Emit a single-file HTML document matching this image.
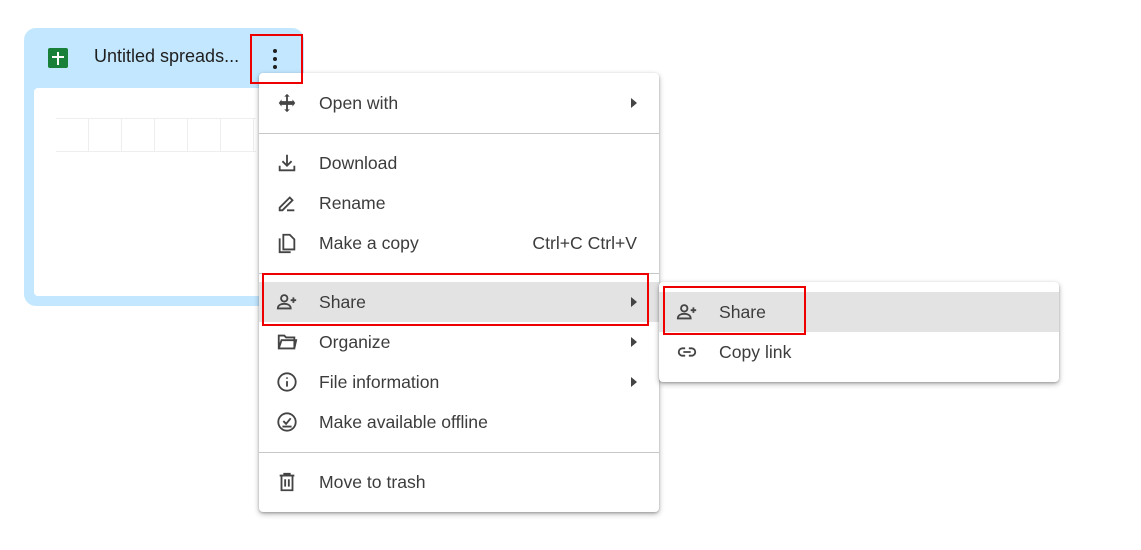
<!DOCTYPE html>
<html><head><style>
*{margin:0;padding:0;box-sizing:border-box}
body{width:1141px;height:550px;background:#fff;position:relative;overflow:hidden;font-family:"Liberation Sans",Arial,sans-serif;color:#1f1f1f}
.card{position:absolute;left:24px;top:28px;width:280px;height:278px;background:#c2e7ff;border-radius:12px}
.prev{position:absolute;left:10px;top:60px;width:250px;height:208px;background:#fff;border-radius:4px}
.title{position:absolute;left:70px;top:18px;font-size:18px;color:#1f1f1f}
.menu{position:absolute;background:#fff;border-radius:4px;box-shadow:0 2px 6px rgba(0,0,0,.3),0 1px 2px rgba(0,0,0,.2)}
.item{position:absolute;left:0;right:0;height:40px;font-size:17.6px;color:#3c3c3c}
.item .t{position:absolute;left:60px;top:10px}
.item svg{position:absolute;left:17px;top:9px}
.arr{position:absolute;right:22px;top:15px;width:0;height:0;border-left:6px solid #444;border-top:5px solid transparent;border-bottom:5px solid transparent}
.div{position:absolute;left:0;right:0;height:1px;background:#c7c7c7}
.red{position:absolute;border:2px solid #e00;}
</style></head><body>
<div class="card">
 <div style="position:absolute;left:24px;top:20px;width:20px;height:20px;background:#188038;border-radius:2px"></div>
 <div style="position:absolute;left:33px;top:24px;width:2px;height:13px;background:#fff"></div>
 <div style="position:absolute;left:28px;top:28px;width:12px;height:2px;background:#fff"></div>
 <div class="title">Untitled spreads...</div>
 <div class="prev">
  <div style="position:absolute;left:22px;top:30px;width:200px;height:34px;border-top:1px solid #eee;border-bottom:1px solid #eee;background:repeating-linear-gradient(90deg,transparent 0 32px,#eee 32px 33px)"></div>
 </div>
 <div style="position:absolute;left:249px;top:21px;width:4px;height:4px;border-radius:2px;background:#1f1f1f;box-shadow:0 8px 0 #1f1f1f,0 16px 0 #1f1f1f"></div>
</div>

<div class="menu" style="left:259px;top:73px;width:400px;height:439px">
 <div class="item" style="top:10px"><svg width="22" height="22" viewBox="0 0 24 24" fill="#444"><path d="M12 2l-3 3h2v5H6V8l-3 4 3 4v-2h5v5H9l3 3 3-3h-2v-5h5v2l3-4-3-4v2h-5V5h2z"/></svg><span class="t">Open with</span><i class="arr"></i></div>
 <div class="div" style="top:60px"></div>
 <div class="item" style="top:70px"><svg width="22" height="22" viewBox="0 0 24 24" fill="none" stroke="#444" stroke-width="2"><path d="M12 3v11M7 10l5 5 5-5M4 15v5h16v-5"/></svg><span class="t">Download</span></div>
 <div class="item" style="top:110px"><svg width="22" height="22" viewBox="0 0 24 24" fill="none" stroke="#444" stroke-width="2"><path d="M4 20v-3L15 6l3 3L7 20zM12 20h8"/></svg><span class="t">Rename</span></div>
 <div class="item" style="top:150px"><svg width="22" height="22" viewBox="0 0 24 24" fill="none" stroke="#444" stroke-width="2"><path d="M8 3h7l5 5v11H8zM4 7v15h12"/></svg><span class="t">Make a copy</span><span style="position:absolute;right:22px;top:10px">Ctrl+C Ctrl+V</span></div>
 <div class="div" style="top:200px"></div>
 <div class="item" style="top:209px;background:#e3e3e3"><svg width="22" height="22" viewBox="0 0 24 24" fill="none" stroke="#444" stroke-width="2"><circle cx="9" cy="8" r="3.5"/><path d="M2 19c0-4 4-5 7-5s7 1 7 5zM19 7v6M16 10h6"/></svg><span class="t">Share</span><i class="arr"></i></div>
 <div class="item" style="top:249px"><svg width="22" height="22" viewBox="0 0 24 24" fill="none" stroke="#444" stroke-width="2"><path d="M3 5h6l2 2h9v12H3zM3 19l3-9h16l-2 9"/></svg><span class="t">Organize</span><i class="arr"></i></div>
 <div class="item" style="top:289px"><svg width="22" height="22" viewBox="0 0 24 24" fill="none" stroke="#444" stroke-width="2"><circle cx="12" cy="12" r="9.5"/><path d="M12 11v6M12 7v1.5"/></svg><span class="t">File information</span><i class="arr"></i></div>
 <div class="item" style="top:329px"><svg width="22" height="22" viewBox="0 0 24 24" fill="none" stroke="#444" stroke-width="2"><circle cx="12" cy="12" r="9.5"/><path d="M8 11l3 3 5-6M7 17h10"/></svg><span class="t">Make available offline</span></div>
 <div class="div" style="top:379px"></div>
 <div class="item" style="top:389px"><svg width="22" height="22" viewBox="0 0 24 24" fill="none" stroke="#444" stroke-width="2"><path d="M4 5h16M9 5V3h6v2M6 5v16h12V5M10 9v8M14 9v8"/></svg><span class="t">Move to trash</span></div>
</div>

<div class="menu" style="left:659px;top:282px;width:400px;height:100px">
 <div class="item" style="top:10px;background:#e3e3e3"><svg width="22" height="22" viewBox="0 0 24 24" fill="none" stroke="#444" stroke-width="2"><circle cx="9" cy="8" r="3.5"/><path d="M2 19c0-4 4-5 7-5s7 1 7 5zM19 7v6M16 10h6"/></svg><span class="t">Share</span></div>
 <div class="item" style="top:50px"><svg width="22" height="22" viewBox="0 0 24 24" fill="none" stroke="#444" stroke-width="2"><path d="M10 8H7a4 4 0 000 8h3M14 8h3a4 4 0 010 8h-3M8 12h8"/></svg><span class="t">Copy link</span></div>
</div>

<div class="red" style="left:250px;top:34px;width:53px;height:50px"></div>
<div class="red" style="left:262px;top:273px;width:387px;height:53px"></div>
<div class="red" style="left:663px;top:286px;width:143px;height:49px"></div>
</body></html>
